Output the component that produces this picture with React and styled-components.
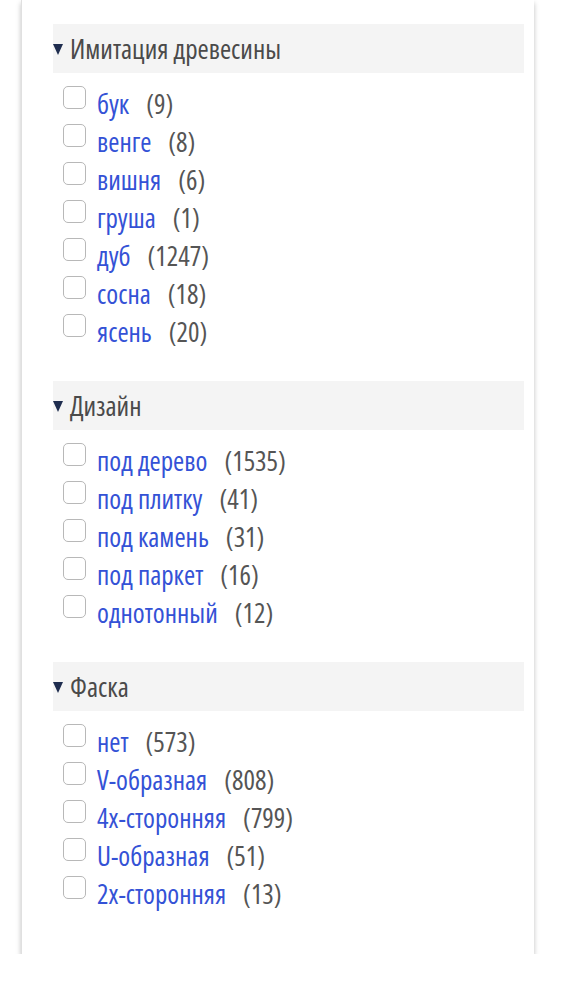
import React from 'react';
import styled, { createGlobalStyle } from 'styled-components';

const GlobalStyle = createGlobalStyle`
  body {
    margin: 0;
    background: #fff;
    font-family: 'Open Sans', 'Noto Sans', sans-serif;
    font-stretch: condensed;
  }
`;

const Page = styled.div`
  padding: 0 28px 0 21px;
`;

const Card = styled.aside`
  background: #fff;
  border-left: 1px solid #e0e0e0;
  box-shadow: 0 3px 5px rgba(0, 0, 0, 0.25);
  padding: 24px 10px 41px 31px;
`;

const Section = styled.section`
  & + & {
    margin-top: 30px;
  }
`;

const Header = styled.div`
  display: flex;
  align-items: center;
  height: 49px;
  background: #f4f4f4;
  color: #4a4a4a;
  font-size: 27px;
  gap: 7px;
`;

const Arrow = styled.span`
  width: 0;
  height: 0;
  border-left: 5px solid transparent;
  border-right: 5px solid transparent;
  border-top: 11px solid #1f2d4f;
  margin-top: 2px;
`;

const List = styled.ul`
  list-style: none;
  margin: 12px 0 0;
  padding: 0 0 0 10px;
`;

const Row = styled.li`
  display: flex;
  align-items: flex-start;
  height: 38px;
  font-size: 27px;
  line-height: 38px;
`;

const Box = styled.span`
  flex: none;
  width: 21px;
  height: 21px;
  margin-top: 1px;
  border: 1px solid #b8b8b8;
  border-radius: 5px;
  background: #fff;
`;

const Name = styled.a`
  margin-left: 11px;
  color: #3452d6;
  text-decoration: none;
`;

const Count = styled.span`
  margin-left: 17px;
  color: #555;
`;

const sections = [
  {
    title: 'Имитация древесины',
    items: [
      ['бук', 9],
      ['венге', 8],
      ['вишня', 6],
      ['груша', 1],
      ['дуб', 1247],
      ['сосна', 18],
      ['ясень', 20],
    ],
  },
  {
    title: 'Дизайн',
    items: [
      ['под дерево', 1535],
      ['под плитку', 41],
      ['под камень', 31],
      ['под паркет', 16],
      ['однотонный', 12],
    ],
  },
  {
    title: 'Фаска',
    items: [
      ['нет', 573],
      ['V-образная', 808],
      ['4x-сторонняя', 799],
      ['U-образная', 51],
      ['2x-сторонняя', 13],
    ],
  },
];

const App = () => (
  <Page>
    <GlobalStyle />
    <Card>
      {sections.map((s) => (
        <Section key={s.title}>
          <Header>
            <Arrow />
            {s.title}
          </Header>
          <List>
            {s.items.map(([name, count]) => (
              <Row key={name}>
                <Box />
                <Name href="#">{name}</Name>
                <Count>({count})</Count>
              </Row>
            ))}
          </List>
        </Section>
      ))}
    </Card>
  </Page>
);

export default App;
